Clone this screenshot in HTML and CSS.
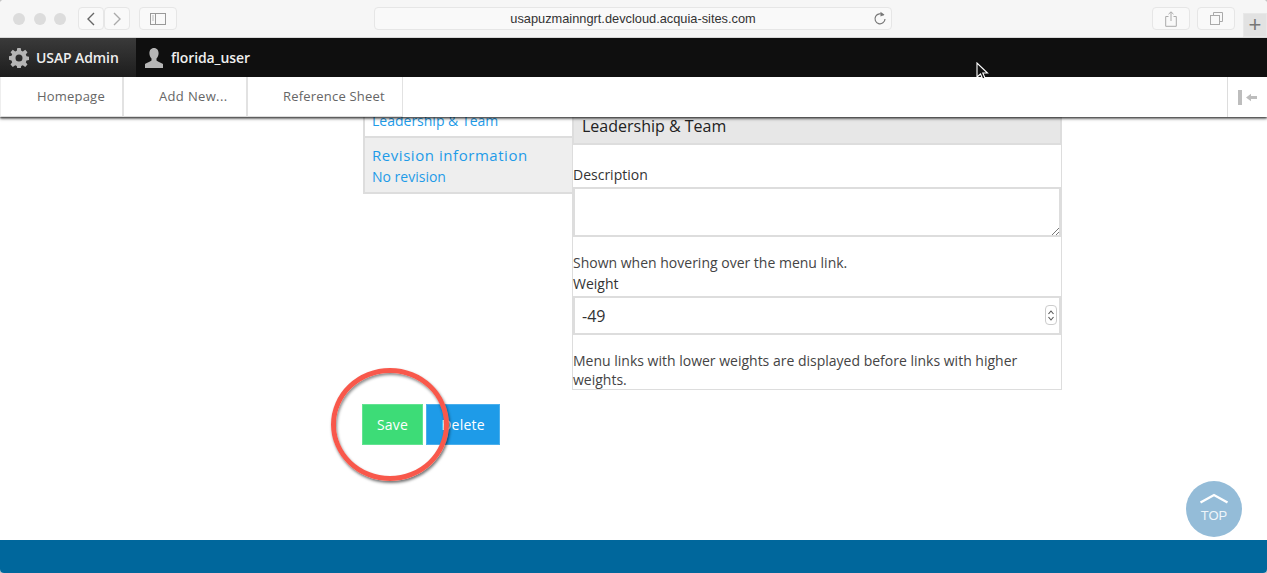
FILE: index.html
```html
<!DOCTYPE html>
<html lang="en">
<head>
<meta charset="utf-8">
<title>Leadership &amp; Team</title>
<link rel="stylesheet" href="styles.css">
</head>
<body>
<div class="window">
  <header class="browser">
    <div class="lights"><i></i><i></i><i></i></div>
    <div class="navpair">
      <span class="tbtn tbtn-nav"><svg width="10" height="14" viewBox="0 0 10 14"><path d="M8 1 2 7l6 6" fill="none" stroke="#666" stroke-width="1.4"/></svg></span>
      <span class="tbtn tbtn-nav"><svg width="10" height="14" viewBox="0 0 10 14"><path d="m2 1 6 6-6 6" fill="none" stroke="#aaa" stroke-width="1.4"/></svg></span>
    </div>
    <span class="tbtn tbtn-side"><svg width="16" height="12" viewBox="0 0 16 12"><rect x=".5" y=".5" width="15" height="11" fill="none" stroke="#999"/><path d="M5.5 0v12" stroke="#999"/><path d="M2 3h2M2 5h2M2 7h2" stroke="#bbb"/></svg></span>
    <div class="address">
      <span class="url">usapuzmainngrt.devcloud.acquia-sites.com</span>
      <svg class="reload" width="14" height="15" viewBox="0 0 14 15"><path d="M10.5 4.2A5 5 0 1 0 12 8" fill="none" stroke="#777" stroke-width="1.2"/><path d="M7.5 .8 11.5 3.8 7.5 5.6z" fill="#777"/></svg>
    </div>
    <span class="tbtn tbtn-side tbtn-share"><svg width="12" height="16" viewBox="0 0 12 16"><path d="M3.5 5.5H.7v9.8h10.6V5.5H8.5" fill="none" stroke="#aaa"/><path d="M6 10V1M3.5 3.2 6 .8l2.5 2.4" fill="none" stroke="#aaa"/></svg></span>
    <span class="tbtn tbtn-side tbtn-tabs"><svg width="13" height="13" viewBox="0 0 13 13"><rect x=".5" y="3.5" width="9" height="9" fill="none" stroke="#aaa"/><path d="M3.5 3.5v-3h9v9h-3" fill="none" stroke="#aaa"/></svg></span>
    <span class="newtab">+</span>
  </header>

  <div class="toolbar">
    <div class="adminbar">
      <a class="admin-home">
        <svg width="20" height="20" viewBox="0 0 20 20"><path fill="#b5b5b5" fill-rule="evenodd" d="M8.3 0h3.4l.5 2.8 1.600.7L16.200 1.800l2.300 2.400-1.700 2.400.7 1.600 2.500.5v3.400l-2.500.5-.7 1.600 1.700 2.300-2.300 2.400-2.400-1.700-1.600.7-.5 2.800H8.300l-.5-2.800-1.600-.7-2.400 1.700-2.300-2.400 1.700-2.300-.7-1.600L0 11.700V8.300l2.500-.5.700-1.600L1.500 4.200l2.300-2.400 2.400 1.700 1.600-.7zM10 6.500a3.500 3.500 0 1 0 0 7 3.500 3.500 0 0 0 0-7z"/></svg>
        <span>USAP Admin</span>
      </a>
      <a class="admin-user">
        <svg width="20" height="20" viewBox="0 0 20 20"><path fill="#b5b5b5" d="M10 0c3 0 4.600 2.300 4.600 5.200 0 2.200-.9 4.200-2.100 5.300v1.700c0 1 4.500 2.300 6.500 3.800V20H1v-4c2-1.500 6.500-2.800 6.500-3.800v-1.700C6.300 9.400 5.400 7.400 5.400 5.200 5.400 2.300 7 0 10 0z"/></svg>
        <span>florida_user</span>
      </a>
    </div>
    <nav class="menubar">
      <a class="menu-item item-home">Homepage</a>
      <a class="menu-item item-add">Add New...</a>
      <a class="menu-item item-ref">Reference Sheet</a>
      <span class="menu-toggle"><svg width="20" height="15" viewBox="0 0 20 15"><path fill="#bdbdbd" d="M0 0h4v15H0zM8 7.500l5-3.700V6h6v3h-6v2.200z"/></svg></span>
    </nav>
  </div>

  <main class="content">
    <form class="edit-form">
      <div class="columns">
        <ul class="tabs">
          <li class="tab tab-plain"><a>Leadership &amp; Team</a></li>
          <li class="tab tab-active"><strong>Revision information</strong><a>No revision</a></li>
        </ul>
        <section class="panel">
          <div class="title-field">Leadership &amp; Team</div>
          <label class="label label-desc">Description</label>
          <div class="textarea"><svg class="grip" width="8" height="8" viewBox="0 0 8 8"><path d="M1 8 8 1M5 8l3-3" stroke="#777"/></svg></div>
          <p class="help help-desc">Shown when hovering over the menu link.</p>
          <label class="label">Weight</label>
          <div class="number">-49
            <span class="spinner"><svg width="8" height="13" viewBox="0 0 8 13"><path d="m1.500 5 2.500-3 2.500 3M1.500 8 4 11l2.500-3" fill="none" stroke="#555" stroke-width="1.100"/></svg></span>
          </div>
          <p class="help help-weight">Menu links with lower weights are displayed before links with higher weights.</p>
        </section>
      </div>
      <div class="actions">
        <button type="button" class="btn btn-save">Save</button>
        <button type="button" class="btn btn-delete">Delete</button>
      </div>
    </form>
  </main>

  <footer class="footer"></footer>

  <div class="ring"></div>
  <a class="to-top"><svg width="30" height="11" viewBox="0 0 30 11"><path d="M1.500 9.500 15 2l13.500 7.500" fill="none" stroke="#fff" stroke-width="2.400"/></svg><span>TOP</span></a>
  <svg class="cursor" width="13" height="19" viewBox="0 0 13 19"><path d="M1 1v14l3.500-3 2.200 5 2.300-1-2.200-5H11.500z" fill="#111" stroke="#fff" stroke-width="1.100"/></svg>
</div>
</body>
</html>
```
FILE: styles.css
```css
* { box-sizing: border-box; }
html, body { margin: 0; height: 100%; overflow: hidden; background: #c4c4c4; }
body { font-family: "Open Sans", "Liberation Sans", sans-serif; color: #444; }
a { text-decoration: none; }
ul { list-style: none; margin: 0; padding: 0; }
p { margin: 0; }

.window { position: relative; display: flex; flex-direction: column; width: 1267px; height: 573px; overflow: hidden; background: #fff; border-radius: 4px; }

/* Browser chrome */
.browser { position: relative; z-index: 3; flex: none; display: flex; align-items: center; height: 38px; padding: 0 0 0 13px; background: #f6f6f6; border-bottom: 1px solid #d8d8d8; }
.lights { display: flex; gap: 8.500px; }
.lights i { width: 12px; height: 12px; border-radius: 50%; background: #dcdcdc; }
.navpair { display: flex; margin-left: 12px; }
.tbtn { display: flex; align-items: center; justify-content: center; height: 23px; background: #f9f9f9; border: 1px solid #e6e6e6; border-radius: 4px; }
.tbtn-nav { width: 26px; }
.tbtn-side { width: 38px; margin-left: 9px; }
.address { position: relative; display: flex; align-items: center; justify-content: center; width: 518px; height: 23px; margin-left: 197px; background: #f9f9f9; border: 1px solid #e6e6e6; border-radius: 4px; }
.url { font: 12.800px "Liberation Sans", Arial, sans-serif; color: #333; }
.reload { position: absolute; right: 4px; top: 3px; }
.tbtn-share { margin-left: 260px; }
.tbtn-tabs { margin-left: 7px; }
.newtab { position: absolute; right: 0; bottom: 0; width: 24px; height: 24px; background: #e2e2e2; border: 1px solid #e8e8e8; color: #777; font: 300 22px/22px "Liberation Sans", sans-serif; text-align: center; }

/* Admin toolbar */
.toolbar { position: relative; z-index: 2; flex: none; box-shadow: 0 1px 2px rgba(0, 0, 0, .7), 0 2px 3px rgba(0, 0, 0, .35); }
.adminbar { display: flex; height: 39px; background: #0f0f0f; font-size: 14px; font-weight: 600; letter-spacing: -.1px; color: #eee; }
.admin-home { display: flex; align-items: center; gap: 7px; width: 136px; padding-left: 9px; background: linear-gradient(#3a3a3a, #1d1d1d); }
.admin-user { display: flex; align-items: center; gap: 7px; padding-left: 8px; }
.menubar { display: flex; height: 40px; background: #fff; font-size: 13px; letter-spacing: .2px; color: #666; }
.menu-item { display: flex; align-items: center; height: 40px; padding-bottom: 2px; border-right: 2px solid #e2e2e2; border-bottom: 1px solid #ddd; }
.item-home { width: 124px; padding-left: 36px; border-left: 1px solid #eee; }
.item-add { width: 124px; padding-left: 35px; letter-spacing: .35px; }
.item-ref { width: 155px; padding-left: 35px; border-right-width: 1px; }
.menu-toggle { display: flex; align-items: center; justify-content: center; width: 40px; margin-left: auto; border-left: 1px solid #ddd; }

/* Content */
.content { flex: 1; min-height: 0; margin-top: -13px; padding-left: 362px; }
.edit-form { width: 700px; }
.columns { display: flex; align-items: flex-start; }
.tabs { flex: none; width: 210px; margin-left: 1px; margin-right: -1px; border-left: 2px solid #ddd; }
.tab a { display: block; color: #1e9be8; font-size: 14px; line-height: 20px; }
.tab-plain { height: 34px; padding: 7px 0 0 7px; border-bottom: 2px solid #ddd; }
.tab-active { height: 56px; padding: 7px 0 0 7px; background: #eee; border-bottom: 2px solid #ddd; }
.tab-active strong { display: block; color: #1e9be8; font-size: 15px; font-weight: 400; letter-spacing: .55px; line-height: 21px; }
.tab-active a { padding-top: 1px; }
.panel { flex: none; width: 490px; height: 286px; border: solid #ddd; border-width: 0 1px 1px; color: #444; }
.title-field { height: 41px; padding: 10px 8px 0; background: #e7e7e7; border: solid #ddd; border-width: 0 1px 2px 1px; color: #222; font-size: 16px; line-height: 24px; }
.label { display: block; color: #333; font-size: 14px; line-height: 20px; }
.label-desc { margin-top: 20px; }
.textarea { position: relative; height: 50px; margin-top: 2px; border: 2px solid #ddd; background: #fff; }
.grip { position: absolute; right: 0; bottom: 0; }
.help { font-size: 14px; line-height: 19px; color: #444; }
.help-desc { margin-top: 16px; margin-bottom: 2px; }
.number { position: relative; height: 39px; margin-top: 2px; padding-left: 7px; border: 2px solid #ddd; background: #fff; color: #333; font-size: 16px; line-height: 36px; }
.spinner { position: absolute; right: 2px; top: 7px; display: flex; align-items: center; justify-content: center; width: 12px; height: 20px; background: #fff; border: 1px solid #ccc; border-radius: 4px; }
.help-weight { margin-top: 16px; }
.actions { display: flex; gap: 3px; margin-top: 14px; }
.btn { height: 41px; padding: 0; border: 1px solid rgba(255, 255, 255, .2); color: #fff; font: 14px "Open Sans", sans-serif; letter-spacing: .2px; }
.btn-save { width: 61px; background: #3ddc77; }
.btn-delete { width: 74px; background: #1e9be8; }
.footer { flex: none; height: 33px; background: #00679c; }

/* Overlays */
.ring { position: absolute; left: 331px; top: 368px; width: 118px; height: 113px; border: 5px solid #f8584b; border-radius: 50%; box-shadow: 1px 2px 3px rgba(0, 0, 0, .55), inset 1px 2px 3px rgba(0, 0, 0, .45); }
.to-top { position: absolute; left: 1186px; top: 481px; display: flex; flex-direction: column; align-items: center; width: 56px; height: 56px; padding-top: 12px; border-radius: 50%; background: #94bcd8; color: #eef5fa; font: 13px/15px "Liberation Sans", Arial, sans-serif; }
.to-top span { margin-top: 4px; }
.cursor { position: absolute; left: 976px; top: 62px; z-index: 4; }
```
